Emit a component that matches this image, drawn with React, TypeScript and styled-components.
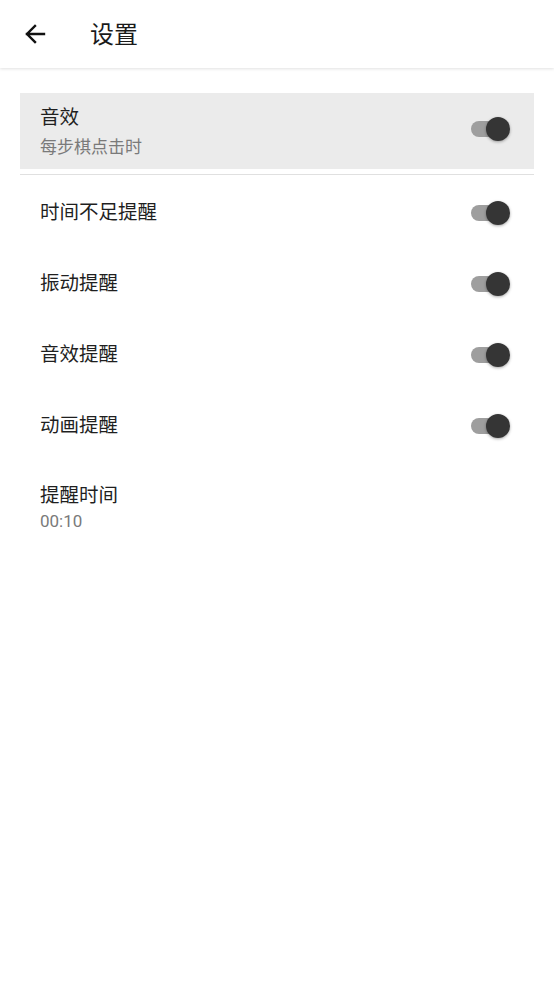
import styled, { createGlobalStyle } from 'styled-components';

const GlobalStyle = createGlobalStyle`
  html, body {
    margin: 0;
    padding: 0;
    background: #ffffff;
  }
  body {
    font-family: Roboto, 'Noto Sans CJK SC', sans-serif;
    color: #212121;
  }
`;

type Setting = {
  title: string;
  sub?: string;
  toggle?: boolean;
};

// 첫 항목은 눌린 상태(회색 배경)로 보인다
const settings: Setting[] = [
  { title: '时间不足提醒', toggle: true },
  { title: '振动提醒', toggle: true },
  { title: '音效提醒', toggle: true },
  { title: '动画提醒', toggle: true },
];

const App = () => {
  return (
    <>
      <GlobalStyle />
      <Page>
        <Header>
          <BackButton aria-label="back">
            <svg width="22" height="22" viewBox="0 0 22 22">
              <path
                d="M20 11H3M11 3L3 11l8 8"
                fill="none"
                stroke="#111"
                strokeWidth="2.4"
                strokeLinecap="square"
              />
            </svg>
          </BackButton>
          <Title>设置</Title>
        </Header>

        <List>
          <Item $active $tall>
            <TextBox $gap={6}>
              <ItemTitle>音效</ItemTitle>
              <ItemSub>每步棋点击时</ItemSub>
            </TextBox>
            <Switch lift />
          </Item>
          <Divider />
          {settings.map((s) => (
            <Item key={s.title}>
              <TextBox>
                <ItemTitle>{s.title}</ItemTitle>
              </TextBox>
              {s.toggle && <Switch />}
            </Item>
          ))}
          <LastItem>
            <TextBox $gap={2}>
              <ItemTitle>提醒时间</ItemTitle>
              <ItemSub>00:10</ItemSub>
            </TextBox>
          </LastItem>
        </List>
      </Page>
    </>
  );
};

const Switch = ({ lift }: { lift?: boolean }) => (
  <SwitchWrap $lift={lift}>
    <Track />
    <Thumb />
  </SwitchWrap>
);

export default App;

const Page = styled.div`
  width: 554px;
  min-height: 984px;
  background: #fff;
`;

const Header = styled.div`
  height: 68px;
  display: flex;
  align-items: center;
  background: #fff;
  box-shadow: 0 1px 3px rgba(0, 0, 0, 0.12);
  position: relative;
  z-index: 1;
`;

const BackButton = styled.div`
  width: 22px;
  height: 22px;
  margin-left: 24px;
  display: flex;
  align-items: center;
  justify-content: center;
`;

const Title = styled.h1`
  margin: 2px 0 0 44px;
  font-size: 24px;
  font-weight: 400;
  color: #1a1a1a;
  line-height: 1;
`;

const List = styled.div`
  display: flex;
  flex-direction: column;
  padding: 25px 20px 0;
`;

const Item = styled.div<{ $active?: boolean; $tall?: boolean }>`
  height: ${(p) => (p.$tall ? '76px' : '71px')};
  display: flex;
  align-items: center;
  justify-content: space-between;
  padding: ${(p) => (p.$tall ? '2px 24px 0 20px' : '0 24px 0 20px')};
  box-sizing: border-box;
  background: ${(p) => (p.$active ? '#ebebeb' : 'transparent')};
`;

const LastItem = styled(Item)`
  height: 86px;
  align-items: flex-start;
  padding-top: 23px;
`;

const Divider = styled.div`
  height: 1px;
  margin: 5px 0 2px;
  background: #e0e0e0;
`;

const TextBox = styled.div<{ $gap?: number }>`
  display: flex;
  flex-direction: column;
  gap: ${(p) => p.$gap ?? 0}px;
`;

const ItemTitle = styled.div`
  font-size: 19.5px;
  line-height: 24px;
  color: #1f1f1f;
`;

const ItemSub = styled.div`
  font-size: 17px;
  line-height: 22px;
  color: #7a7a7a;
`;

const SwitchWrap = styled.div<{ $lift?: boolean }>`
  position: relative;
  width: 40px;
  height: 24px;
  display: flex;
  align-items: center;
  margin-bottom: ${(p) => (p.$lift ? '6px' : '0')};
`;

const Track = styled.div`
  width: 36px;
  height: 16px;
  border-radius: 8px;
  background: #9e9e9e;
  margin-left: 1px;
`;

const Thumb = styled.div`
  position: absolute;
  right: 0;
  top: 0;
  width: 24px;
  height: 24px;
  border-radius: 50%;
  background: #353535;
  box-shadow: 0 1px 3px rgba(0, 0, 0, 0.35);
`;
